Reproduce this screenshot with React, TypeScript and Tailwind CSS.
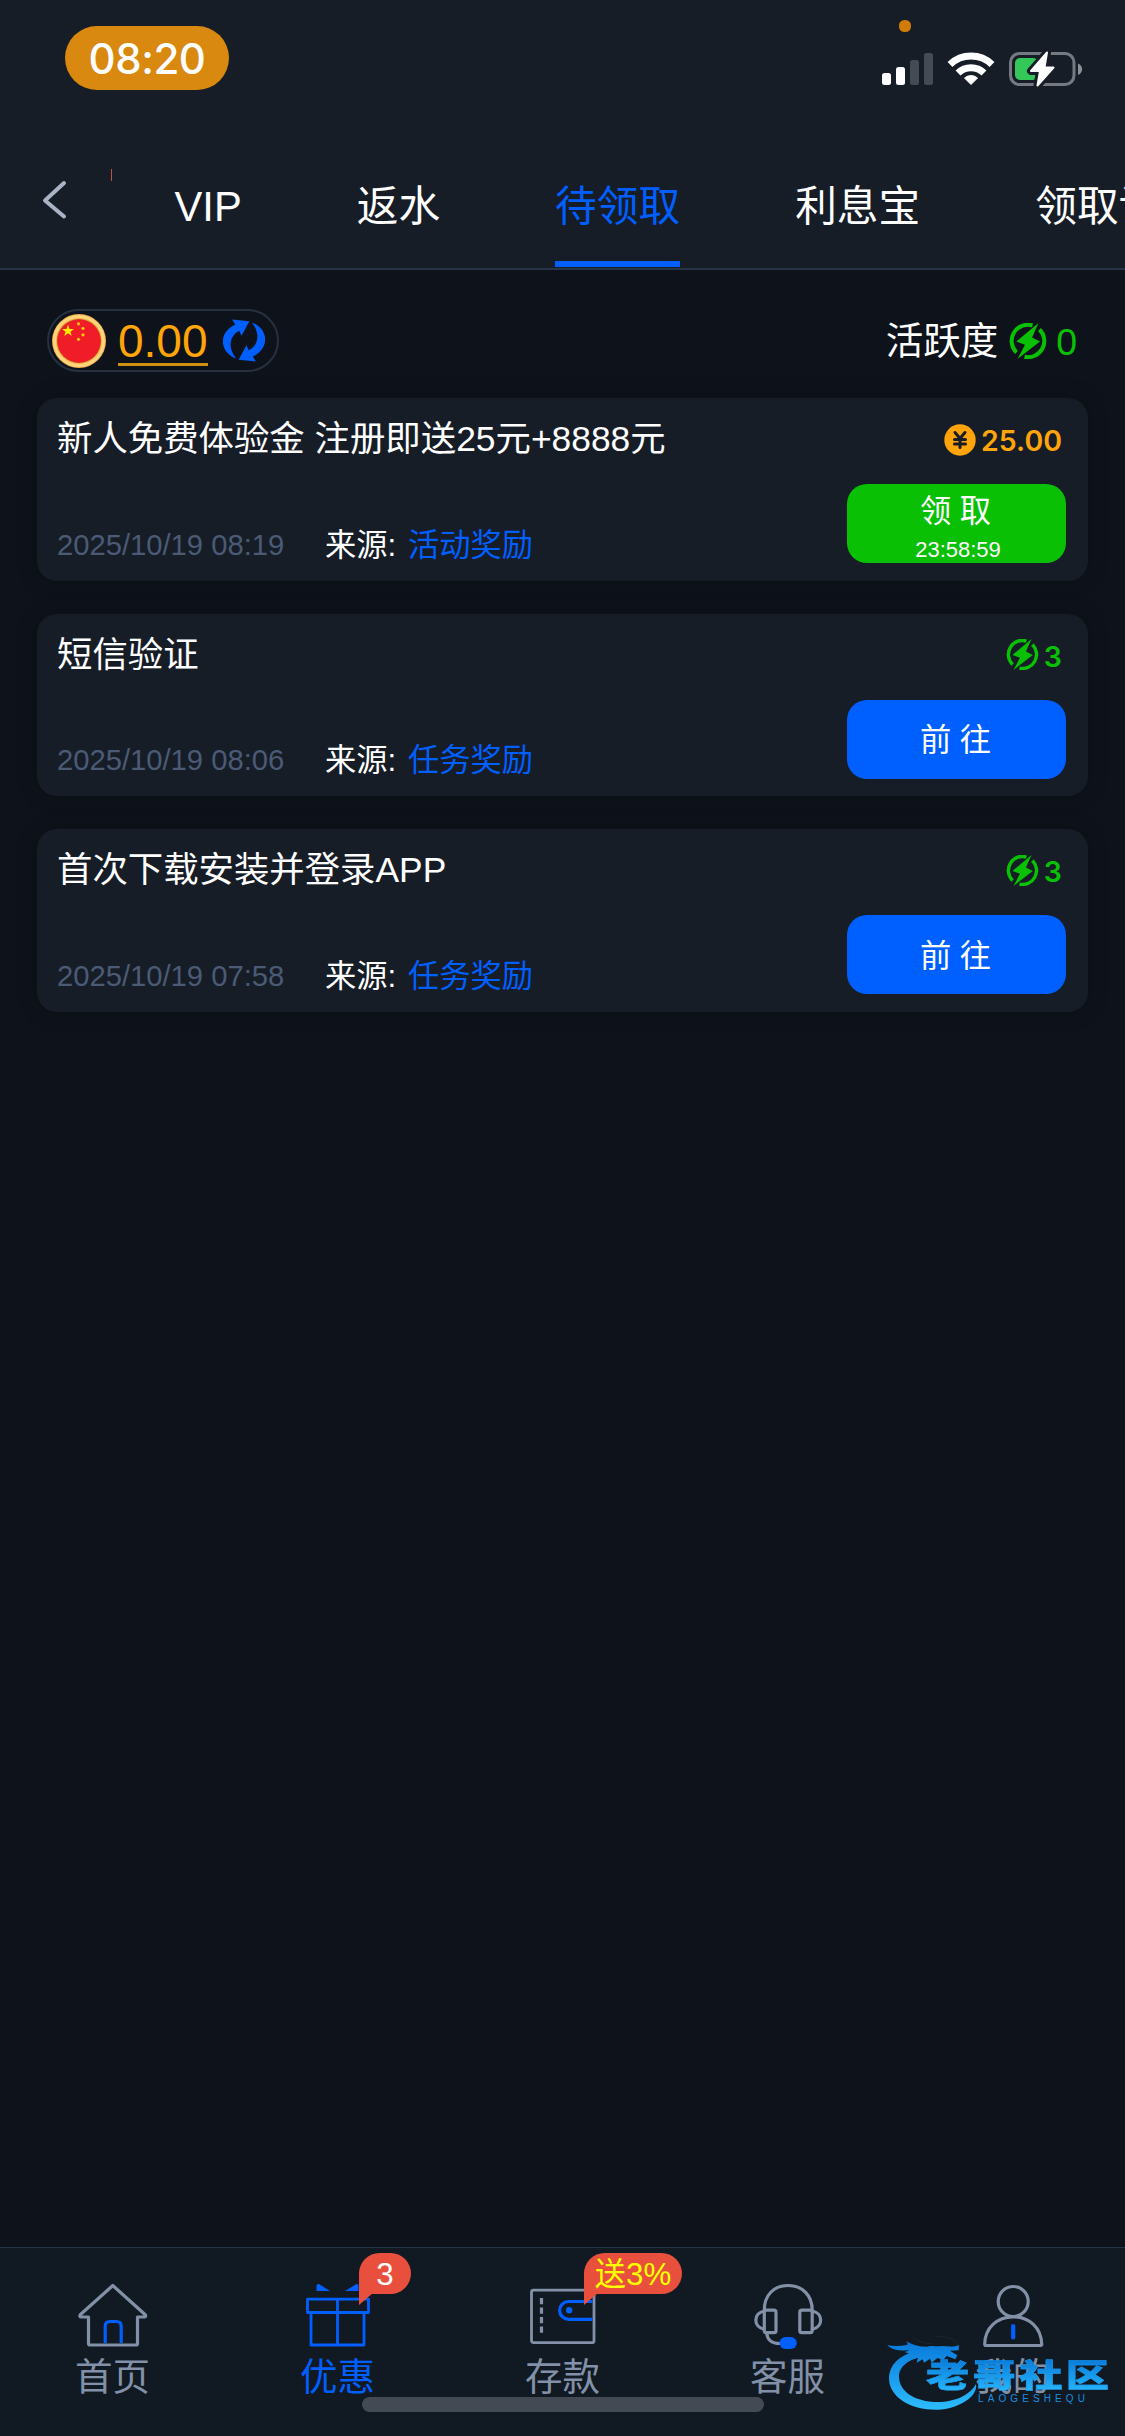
import type { ReactNode } from "react";
import clsx from "clsx";

const tabs = ["VIP", "返水", "待领取", "利息宝", "领取记录"];

type Reward = {
  title: string;
  time: string;
  source: string;
  amount: string;
  kind: "cash" | "activity";
  countdown?: string;
};

const rewards: Reward[] = [
  {
    title: "新人免费体验金 注册即送25元+8888元",
    time: "2025/10/19 08:19",
    source: "活动奖励",
    amount: "25.00",
    kind: "cash",
    countdown: "23:58:59",
  },
  {
    title: "短信验证",
    time: "2025/10/19 08:06",
    source: "任务奖励",
    amount: "3",
    kind: "activity",
  },
  {
    title: "首次下载安装并登录APP",
    time: "2025/10/19 07:58",
    source: "任务奖励",
    amount: "3",
    kind: "activity",
  },
];

function StatusIcons() {
  return (
    <svg width="205" height="72" viewBox="880 17 205 72">
      <rect x="899" y="20" width="12" height="12" rx="5.500" fill="#d07c08" />
      <rect x="882" y="73" width="9" height="12" rx="2.500" fill="#fff" />
      <rect x="896" y="67" width="9" height="18" rx="2.500" fill="#fff" />
      <rect x="910" y="60" width="9" height="25" rx="2.500" fill="#454b55" />
      <rect x="924" y="53" width="9" height="32" rx="2.500" fill="#454b55" />
      <g fill="none" stroke="#fff" strokeWidth="7">
        <path d="M950 64.500A30.500 30.500 0 0 1 992 64.500" />
        <path d="M958 73A18.600 18.600 0 0 1 984 73" />
      </g>
      <path d="M971 84.500L964.500 78A10 10 0 0 1 977.500 78Z" fill="#fff" stroke="#fff" strokeLinejoin="round" />
      <rect x="1010.500" y="53.500" width="63.500" height="31" rx="9" fill="none" stroke="#757a82" strokeWidth="3" />
      <path d="M1078 63.500C1083.500 66 1083.500 72.500 1078 75Z" fill="#8b8f96" />
      <rect x="1015" y="58" width="23" height="22" rx="5" fill="#34c759" />
      <path
        d="M1047 52.500L1031 71H1040L1037.500 85.500L1053.500 67.500H1044.500Z"
        fill="#161d27"
        stroke="#161d27"
        strokeWidth="8"
        strokeLinejoin="round"
      />
      <path
        d="M1047 52.500L1031 71H1040L1037.500 85.500L1053.500 67.500H1044.500Z"
        fill="#fff"
        stroke="#fff"
        strokeWidth="2"
        strokeLinejoin="round"
      />
    </svg>
  );
}

function FlagCoin() {
  return (
    <svg width="54" height="54" viewBox="0 0 54 54">
      <circle cx="27" cy="27" r="27" fill="#f0b24a" />
      <circle cx="27" cy="27" r="24.500" fill="none" stroke="#fbd47c" strokeWidth="3" />
      <circle cx="27" cy="27" r="22" fill="#c9541c" />
      <circle cx="27" cy="27" r="21.500" fill="#f01c27" />
      <path
        d="M16 10.500L17.500 15H22L18.400 17.800L19.800 22L16 19.300L12.200 22L13.600 17.800L10 15H14.500Z"
        fill="#ffee00"
      />
      <g fill="#ffc60a">
        <circle cx="26.500" cy="9.800" r="1.600" />
        <circle cx="31" cy="14.300" r="1.600" />
        <circle cx="31" cy="20.800" r="1.600" />
        <circle cx="26.500" cy="25.300" r="1.600" />
      </g>
    </svg>
  );
}

const arrow =
  "M13.500 40C-3 34 -6 14 12.500 5L9.300 0L27 1.700L19 16.700L16.500 11.500C6 17 5 30 13.500 40Z";

function RefreshIcon() {
  return (
    <svg width="42" height="43" viewBox="0 0 43 43" fill="#005fff">
      <path d={arrow} />
      <path d={arrow} transform="rotate(180 21.500 21.500)" />
    </svg>
  );
}

function BoltIcon({ className }: { className?: string }) {
  return (
    <svg className={className} viewBox="0 0 38 36">
      <g fill="none" stroke="#09c005" strokeWidth="4">
        <path d="M23.500 2.400A16.200 16.200 0 0 0 7.500 29.500" />
        <path d="M30.500 6.500A16.200 16.200 0 0 1 15.500 33.800" />
      </g>
      <path d="M29.500 0L7.300 18.500L16 21.800L8.500 36L31 18.500L23 14.600Z" fill="#09c005" />
    </svg>
  );
}

function YuanIcon() {
  return (
    <svg width="32" height="32" viewBox="0 0 32 32">
      <circle cx="16" cy="16" r="15.700" fill="#ffa50a" />
      <path
        d="M11 8.500L16 14.500L21 8.500M16 14V23.500M10.500 15.500H21.500M10.500 20H21.500"
        fill="none"
        stroke="#161d27"
        strokeWidth="3"
        strokeLinecap="round"
      />
    </svg>
  );
}

function NavIcon({ children }: { children: ReactNode }) {
  return (
    <svg
      width="80"
      height="72"
      viewBox="0 0 80 72"
      fill="none"
      stroke="#8290a8"
      strokeWidth="3.200"
      strokeLinejoin="round"
      strokeLinecap="round"
    >
      {children}
    </svg>
  );
}

const navItems = [
  {
    label: "首页",
    icon: (
      <NavIcon>
        <path d="M15.500 37H8C6.500 37 6.500 35.500 7.500 34.500L39.800 5.500L72 34.500C73 35.500 73 37 71.500 37H64.500V63.500Q64.500 65 63 65H17Q15.500 65 15.500 63.500Z" />
        <path d="M32.200 63V46Q32.200 41.500 37 41.500H43.500Q48.200 41.500 48.200 46V63" stroke="#005fff" strokeLinecap="butt" />
      </NavIcon>
    ),
  },
  {
    label: "优惠",
    active: true,
    badge: "3",
    icon: (
      <NavIcon>
        <g stroke="#005fff" strokeWidth="2.800">
          <path d="M9.500 19.200H70.500V32.500H9.500ZM13 32.500V65H66V32.500M39.500 19.200V65" />
        </g>
        <path d="M18.500 11V5.500Q19 3.500 21 4L32 11ZM47 11L58.500 4Q60.500 3.500 60.500 5.500V11Z" fill="#005fff" stroke="none" />
      </NavIcon>
    ),
  },
  {
    label: "存款",
    badge: "送3%",
    icon: (
      <NavIcon>
        <rect x="8.500" y="10.200" width="62.500" height="52.500" rx="2" strokeWidth="2.800" />
        <path d="M18.500 18V54" strokeDasharray="6.300 3.200" strokeLinecap="butt" />
        <path d="M69.500 21.500H45.500A8.900 8.900 0 0 0 45.500 39.300H69.500" stroke="#005fff" strokeLinecap="butt" />
        <circle cx="46.200" cy="30.300" r="3.200" fill="#005fff" stroke="none" />
      </NavIcon>
    ),
  },
  {
    label: "客服",
    icon: (
      <NavIcon>
        <path d="M16.300 31C16 15 26 5.500 40 5.500C54 5.500 64.500 15 64.200 31" />
        <rect x="16.300" y="30.200" width="11.700" height="22.500" rx="2" />
        <rect x="51.800" y="30.200" width="12.400" height="22.500" rx="2" />
        <path d="M16.300 31C5 33 5 47 16.300 49.500M64.200 31C75.500 33 75.500 47 64.200 49.500" />
        <path d="M18.800 53C19 59 23 63.500 32 63.500" />
        <rect x="31.500" y="57" width="17.300" height="12" rx="6" fill="#005fff" stroke="none" />
      </NavIcon>
    ),
  },
  {
    label: "我的",
    icon: (
      <NavIcon>
        <circle cx="40.200" cy="21.500" r="15" />
        <path d="M40.200 36.800C24 36.800 12 48 11.700 64Q11.700 65.500 13 65.500H67.500Q69 65.500 68.700 64C68.200 48 56.500 36.800 40.200 36.800Z" />
        <path d="M40.200 46V57.500" stroke="#005fff" strokeWidth="4.200" />
      </NavIcon>
    ),
  },
];

function RewardCard({ reward }: { reward: Reward }) {
  const cash = reward.kind === "cash";
  return (
    <div className="flex h-[182.500px] justify-between rounded-[20px] bg-[#161d27] pl-5 pr-[22px] shadow-[0_0_20px_rgba(0,0,0,0.25)]">
      <div className="flex flex-col justify-between pb-[12px] pt-[15px]">
        <h3 className="text-[35.400px] leading-[53px] text-white">{reward.title}</h3>
        <div className="flex items-center text-[31.250px] leading-[44px]">
          <span className="w-[268px] pb-0.5 text-[29.200px] text-[#4b5a75]">{reward.time}</span>
          <span className="w-[83px] text-white">来源:</span>
          <span className="text-[#005fff]">{reward.source}</span>
        </div>
      </div>
      <div className="flex flex-col items-end">
        <div
          className={clsx(
            "flex h-[86px] items-center gap-[5px] pr-[4px] font-['Inter',sans-serif] text-[28.500px] font-semibold",
            cash ? "pb-[3px] text-[#ffa50a]" : "pb-[2px] text-[#09c005]",
          )}
        >
          {cash ? <YuanIcon /> : <BoltIcon className="mb-0.5 h-[31px] w-[33px]" />}
          <span className="pt-[3px]">{reward.amount}</span>
        </div>
        <button
          className={clsx(
            "flex h-[79px] w-[219px] flex-col items-center rounded-[20px] text-[31.250px] text-white",
            cash ? "bg-[#09c005] pt-[8px]" : "justify-center bg-[#005fff] pt-[4px]",
          )}
        >
          <span className="-ml-0.5 leading-[40px]">{cash ? "领 取" : "前 往"}</span>
          {reward.countdown && <span className="ml-[3px] text-[22px] leading-[36px]">{reward.countdown}</span>}
        </button>
      </div>
    </div>
  );
}

function Watermark() {
  return (
    <div className="pointer-events-none absolute bottom-[20px] left-[885px] h-[84px] w-[235px]">
      <svg className="absolute left-0 top-0" width="235" height="84" viewBox="105 306 705 252">
        <defs>
          <linearGradient id="wave" x1="0" y1="330" x2="0" y2="540" gradientUnits="userSpaceOnUse">
            <stop offset="0" stopColor="#0877d8" />
            <stop offset="1" stopColor="#2cbcff" />
          </linearGradient>
        </defs>
        <g fill="url(#wave)">
          <path d="M215 362C155 368 117 400 117 446C118 500 180 540 262 539C325 537 385 500 378 462C362 492 320 516 262 516C195 515 148 485 147 440C147 410 175 385 225 380Z" />
          <path d="M112 345C130 349 150 348 170 345C176 343 172 338 168 333C190 347 210 350 228 350C245 345 260 350 275 348C295 349 312 352 327 345L326 361L300 362L322 376L316 388L290 378L280 390L262 384L245 398L240 386L222 398L218 388L200 398L206 376C190 378 180 372 165 366L178 361C155 362 125 362 112 345Z" />
        </g>
        <path d="M190 320C200 335 222 341 248 340M255 318C290 320 325 330 324 346" fill="none" stroke="#1c2633" strokeWidth="3" />
      </svg>
      <div className="absolute left-[41px] top-[25px] origin-left scale-x-[1.350] bg-gradient-to-b from-[#0877d8] to-[#2cbcff] bg-clip-text text-[32px] font-black leading-[38px] tracking-[2.500px] text-transparent [-webkit-text-stroke:0.400px_#1b98ea]">
        老哥社区
      </div>
      <div className="absolute left-[93px] top-[61px] font-['Liberation_Sans',sans-serif] text-[10px] leading-[12px] tracking-[4.100px] text-[#178fe0]">
        LAOGESHEQU
      </div>
    </div>
  );
}

export default function App() {
  return (
    <div className="relative flex h-[2436px] w-[1125px] flex-col overflow-hidden bg-[#0e131b] font-['Liberation_Sans','Noto_Sans_CJK_SC',sans-serif]">
      <header className="flex h-[270px] flex-col border-b-2 border-[#273447] bg-[#161d27]">
        <div className="flex h-[112px] items-start justify-between pl-[65px] pr-10 pt-[17px]">
          <div className="mt-[9px] flex h-16 w-[164px] items-center justify-center rounded-full bg-[#d9890f] font-['Inter',sans-serif] text-[42px] font-medium tracking-[-0.500px] text-white">
            <span>08:20</span>
          </div>
          <StatusIcons />
        </div>
        <div className="flex flex-1">
          <div className="w-[111px] shrink-0 pl-[42px] pt-[68px]">
            <svg width="25" height="40" viewBox="0 0 25 40" fill="none" stroke="#a8b3c4" strokeWidth="4" strokeLinecap="round" strokeLinejoin="round">
              <path d="M22 3L3 20.500L22 36.500" />
            </svg>
          </div>
          <div className="flex flex-1 overflow-hidden">
            <i className="mt-[57px] h-3 w-px shrink-0 bg-[#c4503f]" />
            <nav className="flex gap-[115px] whitespace-nowrap pb-px pl-[62.500px] text-[41.700px]">
              {tabs.map((tab) => (
                <div
                  key={tab}
                  className={clsx(
                    "flex items-center border-b-6",
                    tab === "待领取" ? "border-[#005fff] text-[#005fff]" : "border-transparent text-white",
                  )}
                >
                  <span className="mt-[42px]">{tab}</span>
                </div>
              ))}
            </nav>
          </div>
        </div>
      </header>

      <main className="flex flex-1 flex-col px-[37px]">
        <div className="flex h-[128px] items-center justify-between pl-[10px] pr-[11px]">
          <div className="mb-[-13px] flex h-[63px] w-[232px] items-center rounded-full border-2 border-[#27303f] pl-[3px]">
            <FlagCoin />
            <span className="ml-3 mt-1 border-b-3 border-[#cf9210] text-[46px] leading-[43px] text-[#ffa50a]">0.00</span>
            <span className="ml-[15px]">
              <RefreshIcon />
            </span>
          </div>
          <div className="mb-[-14px] flex items-center text-[37.500px] text-white">
            <span className="pt-px">活跃度</span>
            <BoltIcon className="ml-[11px] mr-[9px] h-[36px] w-[38px]" />
            <span className="pt-0.5 text-[#09c005]">0</span>
          </div>
        </div>
        <div className="flex flex-col gap-[33px]">
          {rewards.map((reward) => (
            <RewardCard key={reward.title} reward={reward} />
          ))}
        </div>
      </main>

      <footer className="relative flex h-[189px] border-t border-[#273447] bg-[#111a22]">
        {navItems.map((item) => (
          <div key={item.label} className="relative flex w-[225px] flex-col items-center pt-8">
            {item.icon}
            <span className={clsx("-mt-px text-[37.500px] leading-[52px]", item.active ? "text-[#005fff]" : "text-[#8290a8]")}>
              {item.label}
            </span>
            {item.badge && (
              <div
                className={clsx(
                  "absolute left-[134px] top-[5px] flex h-[41px] items-center justify-center rounded-full rounded-bl-none bg-[#e94f3d] pt-[3px] text-[31.250px]",
                  item.badge === "3" ? "w-[52px] text-white" : "w-[98px] text-[#ffff00]",
                )}
              >
                {item.badge}
                <svg className="absolute left-0 top-[40px]" width="14" height="12" viewBox="0 0 14 12">
                  <path d="M0 0H14L0 12Z" fill="#e94f3d" />
                </svg>
              </div>
            )}
          </div>
        ))}
        <div className="absolute bottom-6 left-[362px] h-[15px] w-[402px] rounded-full bg-[#444a53]" />
      </footer>
      <Watermark />
    </div>
  );
}
